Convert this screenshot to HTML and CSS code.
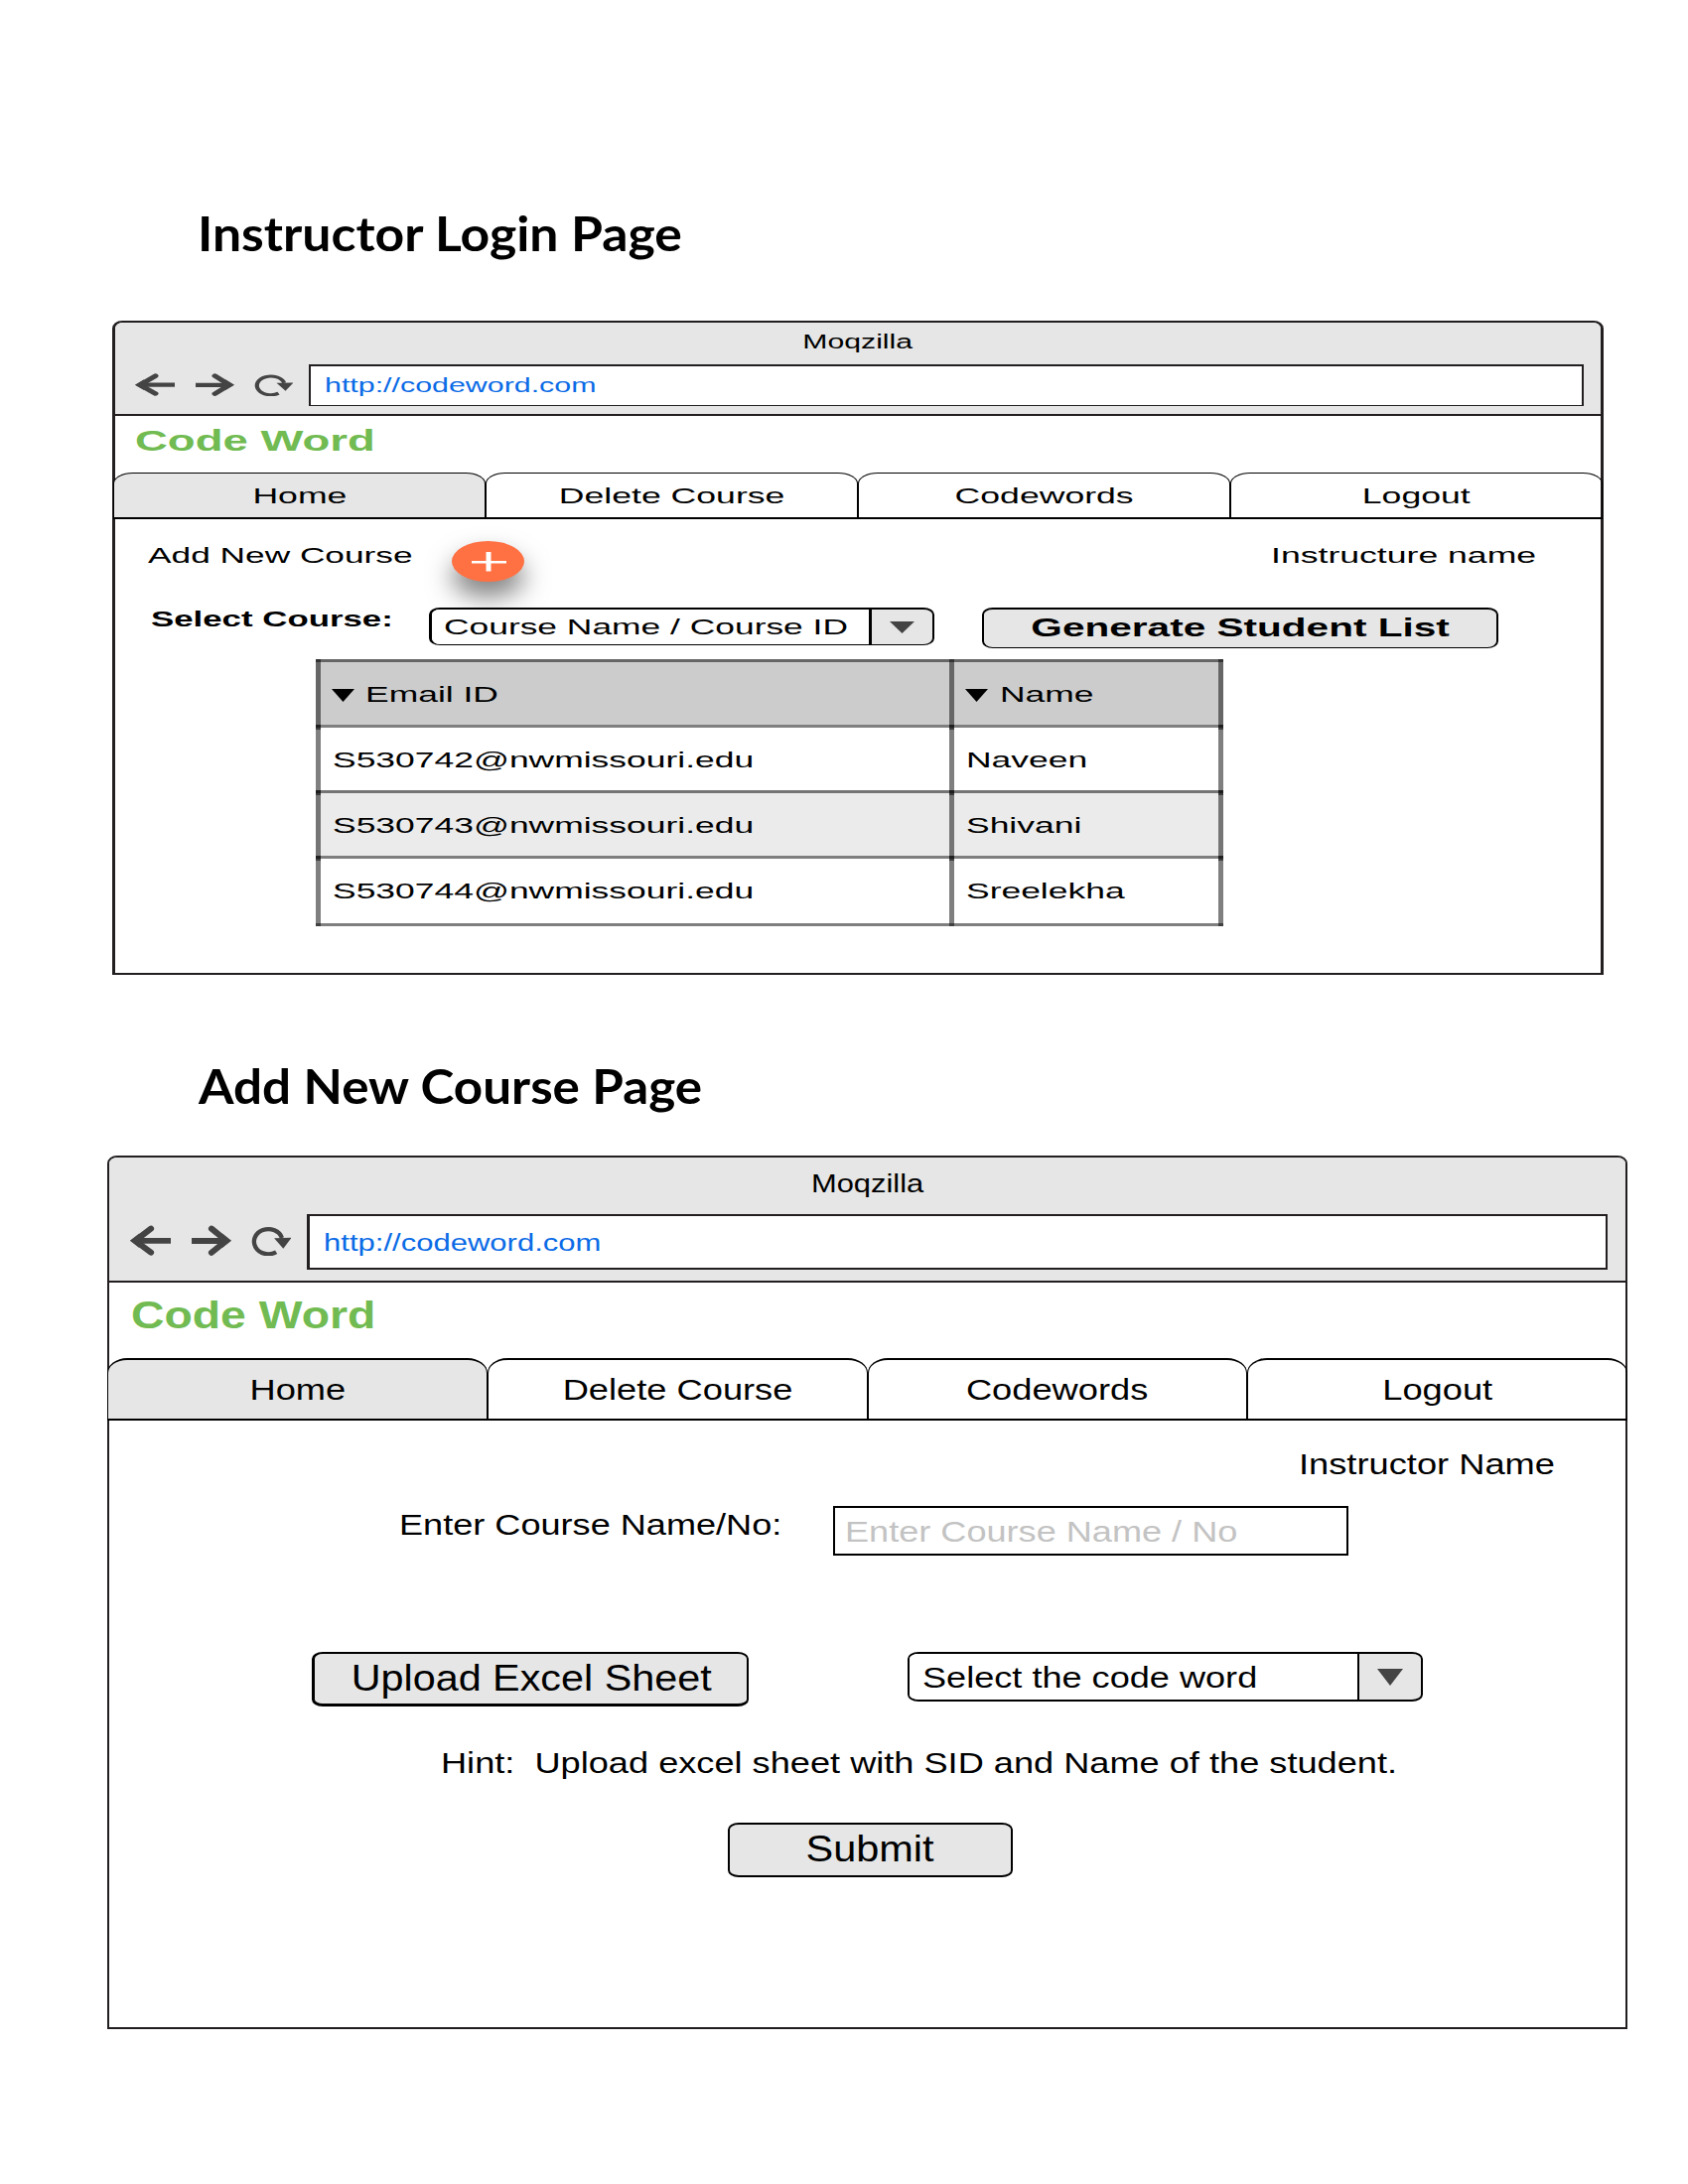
FILE: index.html
```html
<!DOCTYPE html>
<html lang="en">
<head>
<meta charset="utf-8">
<title>Code Word</title>
<link rel="stylesheet" href="styles.css">
</head>
<body>
<svg class="defs" aria-hidden="true">
  <symbol id="back" viewBox="0 0 40 31" preserveAspectRatio="none">
    <path d="M40 15.8H6" fill="none" stroke="#444" stroke-width="5.8"/>
    <path d="M20.5 3.6L5 15.8L20.5 27.6" fill="none" stroke="#444" stroke-width="6" stroke-linecap="round"/>
    <path d="M0 15.8L9 8.5V23Z" fill="#444"/>
  </symbol>
  <symbol id="forward" viewBox="0 0 40 31" preserveAspectRatio="none">
    <path d="M1 16H34" fill="none" stroke="#444" stroke-width="5.8"/>
    <path d="M20.5 3.6L35 15.8L20.5 27.8" fill="none" stroke="#444" stroke-width="6" stroke-linecap="round"/>
    <path d="M40 15.8L31 8.5V23Z" fill="#444"/>
  </symbol>
  <symbol id="reload" viewBox="0 0 40 31" preserveAspectRatio="none">
    <path d="M25.5 27.2A14 12.6 0 1 1 31.2 13" fill="none" stroke="#444" stroke-width="4.2"/>
    <path d="M23.5 13.2L40.5 12.8L32.5 23.8Z" fill="#444"/>
  </symbol>
</svg>

<h1 class="heading login-heading"><span class="t">Instructor Login Page</span></h1>

<section class="window login">
  <header class="chrome">
    <div class="title"><span class="t">Moqzilla</span></div>
    <div class="nav">
      <svg class="icon back"><use href="#back"/></svg>
      <svg class="icon forward"><use href="#forward"/></svg>
      <svg class="icon reload"><use href="#reload"/></svg>
      <div class="url"><span class="t">http://codeword.com</span></div>
    </div>
  </header>
  <div class="brand"><span class="t">Code Word</span></div>
  <nav class="tabs">
    <div class="tab active"><span class="t">Home</span></div>
    <div class="tab"><span class="t">Delete Course</span></div>
    <div class="tab"><span class="t">Codewords</span></div>
    <div class="tab"><span class="t">Logout</span></div>
  </nav>
  <div class="add-row">
    <div class="add-label"><span class="t">Add New Course</span></div>
    <div class="plus"><svg viewBox="0 0 73 41"><path d="M20 21.3H55" stroke="#fff" stroke-width="2.6"/><path d="M37 11V30.5" stroke="#fff" stroke-width="5"/></svg></div>
    <div class="user"><span class="t">Instructure name</span></div>
  </div>
  <div class="course-row">
    <div class="course-label"><span class="t">Select Course:</span></div>
    <div class="select">
      <div class="value"><span class="t">Course Name / Course ID</span></div>
      <div class="arrow"><svg viewBox="0 0 26 17" preserveAspectRatio="none"><path d="M0 0H26L13 17Z" fill="#444"/></svg></div>
    </div>
    <div class="button generate"><span class="t">Generate Student List</span></div>
  </div>
  <div class="table">
    <div class="row head">
      <div class="cell"><svg class="sort" viewBox="0 0 23 13"><path d="M0 0H23L11.5 13Z"/></svg><span class="t">Email ID</span></div>
      <div class="cell"><svg class="sort" viewBox="0 0 23 13"><path d="M0 0H23L11.5 13Z"/></svg><span class="t">Name</span></div>
    </div>
    <div class="row"><div class="cell"><span class="t">S530742@nwmissouri.edu</span></div><div class="cell"><span class="t">Naveen</span></div></div>
    <div class="row alt"><div class="cell"><span class="t">S530743@nwmissouri.edu</span></div><div class="cell"><span class="t">Shivani</span></div></div>
    <div class="row last"><div class="cell"><span class="t">S530744@nwmissouri.edu</span></div><div class="cell"><span class="t">Sreelekha</span></div></div>
  </div>
</section>

<h1 class="heading course-heading"><span class="t">Add New Course Page</span></h1>

<section class="window course">
  <header class="chrome">
    <div class="title"><span class="t">Moqzilla</span></div>
    <div class="nav">
      <svg class="icon back"><use href="#back"/></svg>
      <svg class="icon forward"><use href="#forward"/></svg>
      <svg class="icon reload"><use href="#reload"/></svg>
      <div class="url"><span class="t">http://codeword.com</span></div>
    </div>
  </header>
  <div class="brand"><span class="t">Code Word</span></div>
  <nav class="tabs">
    <div class="tab active"><span class="t">Home</span></div>
    <div class="tab"><span class="t">Delete Course</span></div>
    <div class="tab"><span class="t">Codewords</span></div>
    <div class="tab"><span class="t">Logout</span></div>
  </nav>
  <div class="user-row"><span class="t">Instructor Name</span></div>
  <div class="name-row">
    <div class="name-label"><span class="t">Enter Course Name/No:</span></div>
    <div class="input"><span class="t">Enter Course Name / No</span></div>
  </div>
  <div class="upload-row">
    <div class="button upload"><span class="t">Upload Excel Sheet</span></div>
    <div class="select">
      <div class="value"><span class="t">Select the code word</span></div>
      <div class="arrow"><svg viewBox="0 0 26 17" preserveAspectRatio="none"><path d="M0 0H26L13 17Z" fill="#444"/></svg></div>
    </div>
  </div>
  <div class="hint"><span class="t">Hint:  Upload excel sheet with SID and Name of the student.</span></div>
  <div class="button submit"><span class="t">Submit</span></div>
</section>
</body>
</html>
```
FILE: styles.css
```css
* { box-sizing: border-box; }

body {
  margin: 0;
  width: 1700px;
  height: 2200px;
  background: #fff;
  color: #000;
  font-family: "Liberation Sans", Arial, sans-serif;
}

.defs { display: none; }
svg { display: block; }

/* Lettering is wider than the font's own proportions */
.t {
  display: inline-block;
  white-space: pre;
  transform: scaleX(var(--sx, 1));
  transform-origin: left center;
}

.heading {
  margin: 0;
  font-family: Lato, sans-serif;
  font-weight: 700;
  font-size: 48px;
  line-height: 68px;
}
.login-heading { padding: 201px 0 54px 199px; --sx: 1.077; }
.course-heading { padding: 78px 0 36px 200px; --sx: 1.066; }

/* Browser window */
.window {
  border: 2px solid #231f20;
  border-radius: 10px 10px 0 0 / 8px 8px 0 0;
  display: flex;
  flex-direction: column;
}
.window.login {
  width: 1502px;
  height: 659px;
  margin-left: 113px;
  border-left-width: 3px;
  border-right-width: 3px;
  font-size: 22.4px;
  --sx: 1.59;
}
.window.course {
  width: 1531px;
  height: 880px;
  margin-left: 108px;
  font-size: 29.9px;
  --sx: 1.213;
}

.chrome {
  background: #e6e6e6;
  border-bottom: 2px solid #231f20;
  border-radius: 8px 8px 0 0 / 6px 6px 0 0;
}
.title { text-align: center; }
.title .t { transform-origin: center; }
.login .chrome { height: 94px; }
.login .title { height: 42px; line-height: 39px; font-size: 20px; --sx: 1.51; }
.course .chrome { height: 126px; }
.course .title { height: 57px; line-height: 53px; font-size: 26.5px; --sx: 1.165; }

.nav { display: flex; align-items: center; }
.login .nav { padding-left: 20px; }
.course .nav { padding-left: 21px; }
.login .icon { width: 40px; height: 23px; margin: 0 19.5px 2px 0; }
.login .icon.reload { margin-right: 16px; }
.course .icon { width: 41px; height: 31px; margin: 0 19.5px 3px 0; }
.course .icon.reload { margin-right: 16px; }

.url {
  background: #fff;
  border: 2px solid #231f20;
  padding-left: 14px;
  color: #0b6be6;
}
.login .url { width: 1284px; height: 42px; border-bottom-width: 1px; line-height: 39px; font-size: 19.6px; --sx: 1.55; }
.course .url { width: 1310px; height: 56px; border-left-width: 3px; line-height: 53px; font-size: 24.6px; --sx: 1.262; }

.brand { color: #71bb52; font-weight: 700; }
.login .brand { height: 57px; padding-left: 19.5px; line-height: 50px; font-size: 28.8px; --sx: 1.58; }
.course .brand { height: 76px; padding-left: 21.5px; line-height: 66px; font-size: 38px; --sx: 1.22; }

.tabs {
  display: grid;
  grid-template-columns: repeat(4, 1fr);
  margin: 0 -2px;
  border-bottom: 2px solid #000;
}
.tab { border: 1px solid #000; border-bottom: 0; text-align: center; }
.tab .t { transform-origin: center; }
.tab.active { background: #e6e6e6; }
.login .tab { height: 45px; line-height: 45px; border-radius: 20px 20px 0 0 / 11px 11px 0 0; }
.course .tab { height: 61px; line-height: 59px; border-top-width: 2px; border-radius: 20px 20px 0 0 / 15px 15px 0 0; }

/* Controls */
.button, .select {
  border: 2px solid #000;
  border-radius: 11px / 7px;
  background: #e6e6e6;
}
.button { text-align: center; }
.button .t { transform-origin: center; }
.select { display: flex; overflow: hidden; }
.value { background: #fff; padding-left: 12px; border-right: 2px solid #000; }
.arrow { flex: 1; display: flex; align-items: center; justify-content: center; }

/* Instructor page */
.add-row { display: flex; height: 89px; }
.add-label { width: 339px; padding-left: 32.5px; line-height: 73px; --sx: 1.575; }
.plus {
  width: 73px;
  height: 41px;
  margin-top: 22px;
  border-radius: 50%;
  background: #ff7043;
  box-shadow: 0 15px 26px rgba(0, 0, 0, .5);
}
.user { margin-left: 751.5px; line-height: 73px; }

.course-row { display: flex; align-items: flex-start; height: 52px; position: relative; }
.course-label { width: 316px; padding-left: 36px; line-height: 23px; font-weight: 700; --sx: 1.555; }
.login .select { width: 509px; height: 38px; border-width: 2px 2px 1px 3px; }
.login .value { width: 443px; line-height: 36px; border-right-width: 3px; --sx: 1.58; }
.login .arrow svg { width: 25px; height: 12px; }
.generate { width: 520px; height: 41px; margin-left: 48px; border-bottom-width: 1px; line-height: 37px; font-size: 26px; font-weight: 700; --sx: 1.56; }

.table { width: 914px; margin-left: 202px; }
.row { display: grid; grid-template-columns: 638px 276px; height: 66px; box-shadow: inset 0 3px rgba(0, 0, 0, .5); }
.row.head { background: #ccc; }
.row.alt { background: #ebebeb; }
.row.last { height: 71px; box-shadow: inset 0 3px rgba(0, 0, 0, .5), inset 0 -3px rgba(0, 0, 0, .5); }
.cell { display: flex; border-left: 5px solid rgba(0, 0, 0, .5); padding-left: 11.5px; line-height: 71px; --sx: 1.583; }
.cell:last-child { border-right: 5px solid rgba(0, 0, 0, .5); padding-left: 12px; }
.sort { width: 23px; height: 13px; margin: 30px 11.5px 0 -1px; }

/* Course page */
.user-row { height: 86px; padding-left: 1198px; line-height: 87px; }
.name-row { display: flex; height: 50px; margin-bottom: 97px; }
.name-label { width: 729px; padding-left: 291.5px; line-height: 37px; --sx: 1.208; }
.input { width: 519px; border: 2px solid #000; padding-left: 10px; line-height: 48px; color: #c3c3c3; --sx: 1.208; }
.upload-row { display: flex; height: 55px; padding-left: 204px; }
.upload { width: 440px; border-bottom-width: 3px; border-left-width: 3px; line-height: 49px; font-size: 36px; --sx: 1.148; }
.upload .t { padding-left: 1px; }
.course .select { width: 519px; height: 50px; margin-left: 160px; }
.course .value { width: 453px; padding-left: 13px; line-height: 47px; --sx: 1.208; }
.course .arrow svg { width: 26px; height: 17px; }
.hint { height: 117px; padding-left: 333.5px; line-height: 113px; --sx: 1.21; }
.submit { width: 287px; height: 55px; margin-left: 623px; line-height: 49px; font-size: 36px; --sx: 1.152; }
```
